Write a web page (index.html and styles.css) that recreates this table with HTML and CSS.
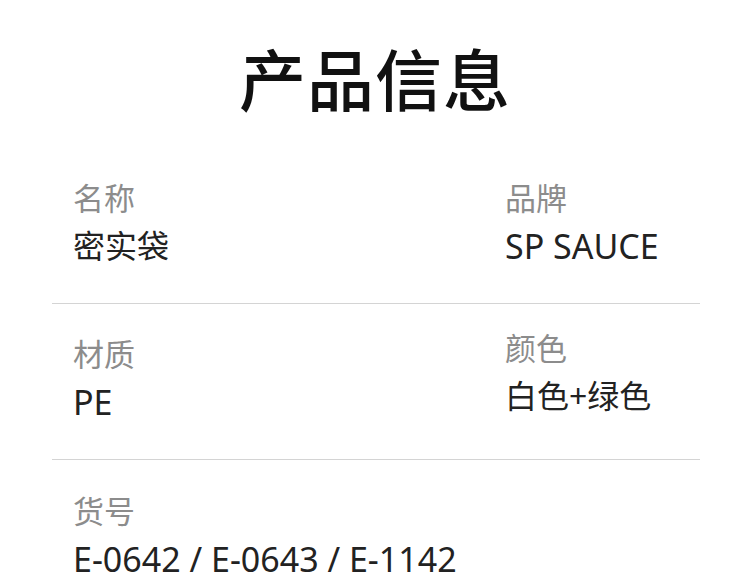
FILE: index.html
```html
<!DOCTYPE html>
<html>
<head lang="zh">
    <meta charset="UTF-8">
    <title>产品信息</title>
    <link rel="stylesheet" href="styles.css">
</head>
<body>
<div class="page">
    <h1 class="title">产品信息</h1>
    <div class="info">
        <div class="row">
            <div class="cell">
                <div class="label">名称</div>
                <div class="value">密实袋</div>
            </div>
            <div class="cell">
                <div class="label">品牌</div>
                <div class="value latin">SP SAUCE</div>
            </div>
        </div>
        <div class="row">
            <div class="cell">
                <div class="label">材质</div>
                <div class="value latin">PE</div>
            </div>
            <div class="cell up">
                <div class="label">颜色</div>
                <div class="value">白色+绿色</div>
            </div>
        </div>
        <div class="row last">
            <div class="cell wide">
                <div class="label">货号</div>
                <div class="value latin">E-0642 / E-0643 / E-1142</div>
            </div>
        </div>
    </div>
</div>
</body>
</html>
```

FILE: styles.css
```css
*{
    margin: 0;
    padding: 0;
}
body{
    background: #fff;
    font-family: "Noto Sans", "Noto Sans CJK SC", sans-serif;
    overflow: hidden;
}
.page{
    width: 750px;
}
.title{
    margin: 37px 0 31px;
    height: 80px;
    font: 500 67px/80px "Noto Sans CJK SC", sans-serif;
    color: #111;
    text-align: center;
    letter-spacing: 1px;
}
.info{
    margin: 0 50px 0 52px;
}
.row{
    display: grid;
    grid-template-columns: 432px 1fr;
    padding: 32px 0 37px 21px;
    border-bottom: 1px solid #d4d4d4;
}
.row.last{
    border-bottom: none;
    padding-top: 33px;
}
.cell.up{
    margin-top: -6px;
}
.cell.wide{
    grid-column: 1 / 3;
}
.label{
    font-size: 31px;
    line-height: 36px;
    color: #8c8c8c;
}
.value{
    margin-top: 10px;
    font-size: 32px;
    line-height: 40px;
    color: #222;
}
.value.latin{
    font-size: 34px;
}
```
